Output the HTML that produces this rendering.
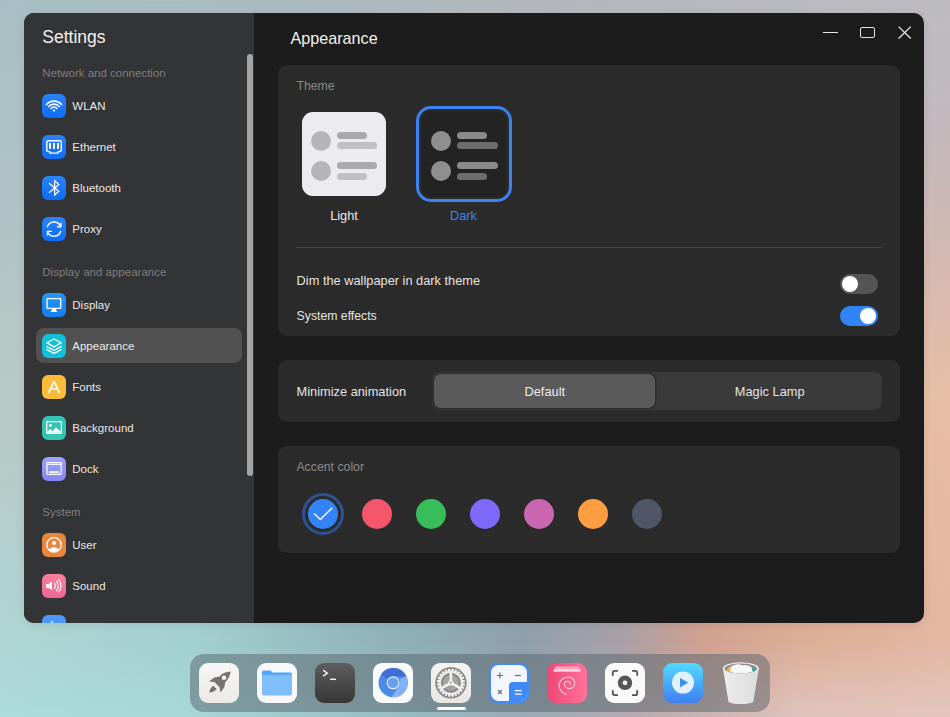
<!DOCTYPE html><html><head><meta charset="utf-8"><style>*{margin:0;padding:0;box-sizing:border-box}
html,body{width:950px;height:717px;overflow:hidden}
body{position:relative;font-family:"Liberation Sans",sans-serif;
background:
 radial-gradient(ellipse 560px 460px at 1000px 560px, rgba(234,184,156,1), rgba(234,184,156,0) 100%),
 radial-gradient(ellipse 460px 360px at -20px 720px, rgba(166,216,214,1), rgba(166,216,214,0) 100%),
 linear-gradient(180deg,#aebfc4 0%,#b9c3c6 50%,#b4cbcb 100%);
}
.abs{position:absolute}
.t{position:absolute;white-space:nowrap;line-height:1}
#win{border-radius:10px;background:#1c1c1c;box-shadow:0 2px 10px rgba(0,0,0,0.08)}
#side{border-radius:10px 0 0 10px;background:#333435}
.ic{position:absolute;width:24px;height:24px;border-radius:6px;overflow:hidden}
.ic svg{display:block}
.panel{border-radius:9px;background:#2b2b2b}
.toggle{width:38px;height:20px;border-radius:10px}
.toggle.off{background:#555555}
.toggle.on{background:#3283f6}
.knob{position:absolute;top:2px;width:16px;height:16px;border-radius:50%;background:#fff}
</style></head><body>
<div class="abs" style="left:0;top:0px;width:950px;height:120px;background:linear-gradient(90deg,#a8bfc4 0px,#abbcc2 300px,#b6b8bd 600px,#bdbcc2 950px)"></div>
<div class="abs" style="left:0;top:0px;width:950px;height:120px;background:linear-gradient(90deg,#acc2c5 0px,#c2b9bd 950px);-webkit-mask-image:linear-gradient(180deg,transparent,#000)"></div>
<div class="abs" style="left:0;top:120px;width:950px;height:100px;background:linear-gradient(90deg,#acc2c5 0px,#c2b9bd 950px)"></div>
<div class="abs" style="left:0;top:120px;width:950px;height:100px;background:linear-gradient(90deg,#b0c4c6 0px,#d0b8b4 950px);-webkit-mask-image:linear-gradient(180deg,transparent,#000)"></div>
<div class="abs" style="left:0;top:220px;width:950px;height:180px;background:linear-gradient(90deg,#b0c4c6 0px,#d0b8b4 950px)"></div>
<div class="abs" style="left:0;top:220px;width:950px;height:180px;background:linear-gradient(90deg,#b8cac6 0px,#e8bea6 950px);-webkit-mask-image:linear-gradient(180deg,transparent,#000)"></div>
<div class="abs" style="left:0;top:400px;width:950px;height:190px;background:linear-gradient(90deg,#b8cac6 0px,#e8bea6 950px)"></div>
<div class="abs" style="left:0;top:400px;width:950px;height:190px;background:linear-gradient(90deg,#b2d2d0 0px,#a6d0d0 190px,#92b2ba 400px,#90a2ae 520px,#aaa2a8 620px,#d0a292 700px,#dcae98 800px,#e6b8a2 950px);-webkit-mask-image:linear-gradient(180deg,transparent,#000)"></div>
<div class="abs" style="left:0;top:590px;width:950px;height:50px;background:linear-gradient(90deg,#b2d2d0 0px,#a6d0d0 190px,#92b2ba 400px,#90a2ae 520px,#aaa2a8 620px,#d0a292 700px,#dcae98 800px,#e6b8a2 950px)"></div>
<div class="abs" style="left:0;top:590px;width:950px;height:50px;background:linear-gradient(90deg,#b0d6d4 0px,#a3d0d0 190px,#8fb0b8 400px,#8ea0ac 520px,#a8a0a8 620px,#d0a090 700px,#dcae96 800px,#e4b8a4 950px);-webkit-mask-image:linear-gradient(180deg,transparent,#000)"></div>
<div class="abs" style="left:0;top:640px;width:950px;height:77px;background:linear-gradient(90deg,#b0d6d4 0px,#a3d0d0 190px,#8fb0b8 400px,#8ea0ac 520px,#a8a0a8 620px,#d0a090 700px,#dcae96 800px,#e4b8a4 950px)"></div>
<div class="abs" style="left:0;top:640px;width:950px;height:77px;background:linear-gradient(90deg,#acdcdc 0px,#a8d8d8 180px,#98bcc4 400px,#98acb6 520px,#b8aab0 640px,#e0c4bc 800px,#e2c6bc 950px);-webkit-mask-image:linear-gradient(180deg,transparent,#000)"></div>
<div class="abs" id="win" style="left:24px;top:13px;width:900px;height:610px;"></div>
<div class="abs" id="side" style="left:24px;top:13px;width:230px;height:610px;"></div>
<div class="t" style="left:42.3px;top:29.09px;font-size:17.5px;color:#f2f2f2;">Settings</div>
<div class="abs" style="left:247px;top:54px;width:6px;height:422px;border-radius:3px;background:#a4a4a4"></div>
<div class="t" style="left:42.3px;top:68.17px;font-size:11.5px;color:#7f7f7f;">Network and connection</div>
<div class="abs ic" style="left:42px;top:94px"><svg width="24" height="24" viewBox="0 0 24 24"><defs><linearGradient id="gb1" x1="0" y1="0" x2="0" y2="1"><stop offset="0" stop-color="#2a82fc"/><stop offset="1" stop-color="#0f6cf4"/></linearGradient></defs><rect width="24" height="24" fill="url(#gb1)"/><g fill="none" stroke="#fff" stroke-width="1.6" stroke-linecap="round"><path d="M4.5,10.6 A9.8,9.8 0 0 1 19.5,10.6"/><path d="M6.8,12.5 A6.8,6.8 0 0 1 17.2,12.5"/><path d="M9.1,14.4 A3.8,3.8 0 0 1 14.9,14.4"/></g><circle cx="12" cy="16.6" r="1.15" fill="#fff"/></svg></div>
<div class="t" style="left:72.3px;top:101.37px;font-size:11.5px;color:#e8e8e8;">WLAN</div>
<div class="abs ic" style="left:42px;top:135px"><svg width="24" height="24" viewBox="0 0 24 24"><rect width="24" height="24" fill="url(#gb1)"/><path d="M6.3,5.8 H17.8 Q19.3,5.8 19.3,7.3 V15.8 L16,17 V18.1 H8 V17 L4.8,15.8 V7.3 Q4.8,5.8 6.3,5.8 Z" fill="none" stroke="#fff" stroke-width="1.4" stroke-linejoin="round"/><g fill="#fff"><rect x="7" y="8" width="2" height="6" rx="0.5"/><rect x="11" y="8" width="2" height="6" rx="0.5"/><rect x="15" y="8" width="2" height="6" rx="0.5"/></g></svg></div>
<div class="t" style="left:72.3px;top:142.37px;font-size:11.5px;color:#e8e8e8;">Ethernet</div>
<div class="abs ic" style="left:42px;top:176px"><svg width="24" height="24" viewBox="0 0 24 24"><rect width="24" height="24" fill="url(#gb1)"/><path d="M7.4,7.6 L16.8,15.3 L12.6,19 V4.6 L16.8,8.4 L7.4,16.4" fill="none" stroke="#fff" stroke-width="1.25" stroke-linejoin="miter" stroke-linecap="round"/></svg></div>
<div class="t" style="left:72.3px;top:183.37px;font-size:11.5px;color:#e8e8e8;">Bluetooth</div>
<div class="abs ic" style="left:42px;top:217px"><svg width="24" height="24" viewBox="0 0 24 24"><rect width="24" height="24" fill="url(#gb1)"/><g fill="none" stroke="#fff" stroke-width="1.4" stroke-linecap="round" stroke-linejoin="round"><path d="M5.4,9.6 A7,7 0 0 1 18.2,8.8"/><path d="M18.9,6.3 V9.8 H15.5"/><path d="M18.6,14.4 A7,7 0 0 1 5.9,15.6"/><path d="M9.4,14.4 H5.5 V17.9"/></g></svg></div>
<div class="t" style="left:72.3px;top:224.37px;font-size:11.5px;color:#e8e8e8;">Proxy</div>
<div class="t" style="left:42.3px;top:267.37px;font-size:11.5px;color:#7f7f7f;">Display and appearance</div>
<div class="abs ic" style="left:42px;top:293px"><svg width="24" height="24" viewBox="0 0 24 24"><defs><linearGradient id="gb2" x1="0" y1="0" x2="0" y2="1"><stop offset="0" stop-color="#229af8"/><stop offset="1" stop-color="#137df2"/></linearGradient></defs><rect width="24" height="24" fill="url(#gb2)"/><rect x="5" y="5.6" width="13.7" height="9.8" rx="0.6" fill="none" stroke="#fff" stroke-width="1.3"/><path d="M10,16 H14 L14.6,18 H15.2 V19 H8.8 V18 H9.4 Z" fill="#fff"/></svg></div>
<div class="t" style="left:72.3px;top:300.37px;font-size:11.5px;color:#e8e8e8;">Display</div>
<div class="abs" style="left:36px;top:328px;width:206px;height:35px;border-radius:8px;background:#515151"></div>
<div class="abs ic" style="left:42px;top:334px"><svg width="24" height="24" viewBox="0 0 24 24"><rect width="24" height="24" fill="#10c1d9"/><g fill="none" stroke="#fff" stroke-width="1.4" stroke-linejoin="round" stroke-linecap="round"><path d="M12,5 L19.1,8.9 L12,12.8 L4.9,8.9 Z"/><path d="M4.9,12.6 L12,16.3 L19.1,12.6"/><path d="M4.9,15.6 L12,19.3 L19.1,15.6"/></g></svg></div>
<div class="t" style="left:72.3px;top:341.37px;font-size:11.5px;color:#e8e8e8;">Appearance</div>
<div class="abs ic" style="left:42px;top:375px"><svg width="24" height="24" viewBox="0 0 24 24"><rect width="24" height="24" fill="#fcbc3b"/><g fill="none" stroke="#fff" stroke-width="1.6" stroke-linecap="round" stroke-linejoin="round"><path d="M6.8,17.4 L12,6.3 L17.2,17.4"/><path d="M8.7,13.8 H15.3"/></g></svg></div>
<div class="t" style="left:72.3px;top:382.37px;font-size:11.5px;color:#e8e8e8;">Fonts</div>
<div class="abs ic" style="left:42px;top:416px"><svg width="24" height="24" viewBox="0 0 24 24"><rect width="24" height="24" fill="#34c4b4"/><rect x="4.7" y="5.6" width="14.7" height="11.7" rx="0.8" fill="none" stroke="#fff" stroke-width="1.25"/><circle cx="8.4" cy="9.5" r="1.4" fill="#fff"/><path d="M5.2,16.8 V15.5 L8.2,13.1 L10.4,15 L13.9,11.4 L18.9,15.5 V16.8 Z" fill="#fff"/></svg></div>
<div class="t" style="left:72.3px;top:423.37px;font-size:11.5px;color:#e8e8e8;">Background</div>
<div class="abs ic" style="left:42px;top:457px"><svg width="24" height="24" viewBox="0 0 24 24"><defs><linearGradient id="gp" x1="0" y1="0" x2="0" y2="1"><stop offset="0" stop-color="#a1a3ff"/><stop offset="1" stop-color="#8585f6"/></linearGradient></defs><rect width="24" height="24" fill="url(#gp)"/><rect x="4.9" y="5.6" width="14.3" height="11.8" rx="0.8" fill="none" stroke="#fff" stroke-width="1.2"/><path d="M4.9,7.4 H19.2" stroke="#fff" stroke-width="1"/><rect x="7" y="14.2" width="10" height="1.7" fill="#fff"/></svg></div>
<div class="t" style="left:72.3px;top:464.37px;font-size:11.5px;color:#e8e8e8;">Dock</div>
<div class="t" style="left:42.3px;top:507.17px;font-size:11.5px;color:#7f7f7f;">System</div>
<div class="abs ic" style="left:42px;top:533px"><svg width="24" height="24" viewBox="0 0 24 24"><rect width="24" height="24" fill="#e8863d"/><circle cx="12" cy="11.9" r="7.2" fill="none" stroke="#fff" stroke-width="1.3"/><circle cx="12" cy="9.9" r="2" fill="#fff"/><path d="M6.6,17.3 Q8,14.2 12,14.2 Q16,14.2 17.4,17.3 Q15.4,19.1 12,19.1 Q8.6,19.1 6.6,17.3 Z" fill="#fff"/></svg></div>
<div class="t" style="left:72.3px;top:540.37px;font-size:11.5px;color:#e8e8e8;">User</div>
<div class="abs ic" style="left:42px;top:574px"><svg width="24" height="24" viewBox="0 0 24 24"><defs><linearGradient id="gs" x1="0" y1="0" x2="0" y2="1"><stop offset="0" stop-color="#f9809f"/><stop offset="1" stop-color="#ef6790"/></linearGradient></defs><rect width="24" height="24" fill="url(#gs)"/><path d="M4.1,10 H6.8 L9.9,7.2 V16 L6.8,14 H4.1 Z" fill="#fff"/><g fill="none" stroke="#fff" stroke-width="1.1" stroke-linecap="round"><path d="M12.4,9 Q14.2,11.8 12.4,14.6"/><path d="M14.6,7 Q17.8,11.9 14.6,16.8"/><path d="M16.8,5.5 Q21,11.8 16.8,18"/></g></svg></div>
<div class="t" style="left:72.3px;top:581.37px;font-size:11.5px;color:#e8e8e8;">Sound</div>
<div class="abs" style="left:42px;top:615px;width:24px;height:8px;overflow:hidden"><div class="abs ic" style="left:0;top:0"><svg width="24" height="24" viewBox="0 0 24 24"><rect width="24" height="24" fill="#5097fb"/><path d="M9,5.2 L11.6,7.6 L9.6,8 Z" fill="#fff"/></svg></div></div>
<div class="t" style="left:290.4px;top:29.99px;font-size:16.2px;color:#f2f2f2;">Appearance</div>
<div class="abs" style="left:823px;top:31.7px;width:15px;height:1.5px;background:#e8e8e8"></div>
<div class="abs" style="left:860px;top:27px;width:14.5px;height:11px;border:1.4px solid #e0e0e0;border-radius:2px"></div>
<svg class="abs" style="left:897px;top:25px" width="15" height="15" viewBox="0 0 15 15"><g stroke="#e6e6e6" stroke-width="1.3"><path d="M1.6,1.6 L13.8,13.5"/><path d="M13.8,1.6 L1.6,13.5"/></g></svg><div class="abs panel" style="left:278px;top:65px;width:622px;height:271px"></div>
<div class="t" style="left:296.4px;top:80.49px;font-size:12.3px;color:#8a8a8a;">Theme</div>
<div class="abs" style="left:302px;top:112px;width:84px;height:84px;border-radius:11px;background:#ececf0"></div>
<div class="abs" style="left:311px;top:130.5px;width:20px;height:20px;border-radius:50%;background:#b5b4b6"></div>
<div class="abs" style="left:311px;top:161px;width:20px;height:20px;border-radius:50%;background:#b5b4b6"></div>
<div class="abs" style="left:337px;top:131.5px;width:30px;height:7px;border-radius:3.5px;background:#a9a9ad"></div>
<div class="abs" style="left:337px;top:142.4px;width:40px;height:7px;border-radius:3.5px;background:#c0c0c4"></div>
<div class="abs" style="left:337px;top:162.2px;width:40px;height:7px;border-radius:3.5px;background:#a9a9ad"></div>
<div class="abs" style="left:337px;top:172.8px;width:30px;height:7px;border-radius:3.5px;background:#c0c0c4"></div><div class="abs" style="left:416px;top:106px;width:96px;height:96px;border-radius:15px;border:3px solid #3b83f1"></div>
<div class="abs" style="left:420px;top:110px;width:88px;height:88px;border-radius:12px;background:#232323;box-shadow:inset 0 0 0 1.2px #2c2c2c"></div>
<div class="abs" style="left:431px;top:130.5px;width:20px;height:20px;border-radius:50%;background:#8f8f8f"></div>
<div class="abs" style="left:431px;top:161px;width:20px;height:20px;border-radius:50%;background:#8f8f8f"></div>
<div class="abs" style="left:456.5px;top:131.5px;width:30px;height:7px;border-radius:3.5px;background:#8a8a8a"></div>
<div class="abs" style="left:456.5px;top:142.2px;width:41px;height:7px;border-radius:3.5px;background:#6d6d6d"></div>
<div class="abs" style="left:456.5px;top:161.8px;width:41px;height:7px;border-radius:3.5px;background:#8a8a8a"></div>
<div class="abs" style="left:456.5px;top:172.6px;width:30px;height:7px;border-radius:3.5px;background:#6d6d6d"></div><div class="t" style="left:194px;width:300px;text-align:center;top:209.76px;font-size:12.8px;color:#e8e8e8;">Light</div>
<div class="t" style="left:313.5px;width:300px;text-align:center;top:209.76px;font-size:12.8px;color:#3f83e6;">Dark</div>
<div class="abs" style="left:296px;top:247px;width:586px;height:1px;background:#474747"></div>
<div class="t" style="left:296.6px;top:274.86px;font-size:12.8px;color:#e4e4e4;">Dim the wallpaper in dark theme</div>
<div class="t" style="left:296.6px;top:310.13px;font-size:12.25px;color:#e4e4e4;">System effects</div>
<div class="abs toggle off" style="left:840px;top:273.5px"><div class="knob" style="left:2px"></div></div>
<div class="abs toggle on" style="left:840px;top:305.5px"><div class="knob" style="left:20px"></div></div>
<div class="abs panel" style="left:278px;top:360px;width:622px;height:62px"></div>
<div class="t" style="left:296.6px;top:385.96px;font-size:12.8px;color:#e4e4e4;">Minimize animation</div>
<div class="abs" style="left:432px;top:372px;width:450px;height:38px;border-radius:8px;background:#3a3a3a"></div>
<div class="abs" style="left:434px;top:374px;width:221px;height:34px;border-radius:7px;background:#5a5a5a;box-shadow:0 0 0 1.5px #2f2f2f"></div>
<div class="t" style="left:394.79999999999995px;width:300px;text-align:center;top:385.76px;font-size:12.8px;color:#ececec;">Default</div>
<div class="t" style="left:619.7px;width:300px;text-align:center;top:385.76px;font-size:12.8px;color:#e4e4e4;">Magic Lamp</div>
<div class="abs panel" style="left:278px;top:446px;width:622px;height:107px"></div>
<div class="t" style="left:296.4px;top:461.19px;font-size:12.3px;color:#8a8a8a;">Accent color</div>
<div class="abs" style="left:302px;top:493px;width:42px;height:42px;border-radius:50%;border:3.3px solid #2f5191"></div>
<div class="abs" style="left:308px;top:499px;width:30px;height:30px;border-radius:50%;background:#3384f6"></div>
<svg class="abs" style="left:308px;top:499px" width="30" height="30" viewBox="0 0 30 30"><path d="M6.4,14.7 L12.3,20.6 L23.8,9.3" fill="none" stroke="#fff" stroke-width="1.4" stroke-linecap="round" stroke-linejoin="round"/></svg>
<div class="abs" style="left:362px;top:499px;width:30px;height:30px;border-radius:50%;background:#f5566c"></div>
<div class="abs" style="left:416px;top:499px;width:30px;height:30px;border-radius:50%;background:#37bd5a"></div>
<div class="abs" style="left:470px;top:499px;width:30px;height:30px;border-radius:50%;background:#7f69fb"></div>
<div class="abs" style="left:524px;top:499px;width:30px;height:30px;border-radius:50%;background:#cb66b1"></div>
<div class="abs" style="left:578px;top:499px;width:30px;height:30px;border-radius:50%;background:#fd9e43"></div>
<div class="abs" style="left:632px;top:499px;width:30px;height:30px;border-radius:50%;background:#4f5668"></div><div class="abs" style="left:190px;top:654px;width:580px;height:58px;border-radius:14px;background:rgba(88,100,108,0.5)"></div>
<div class="abs" style="left:199px;top:663px;width:40px;height:40px;border-radius:9px;background:linear-gradient(180deg,#f7f6f4,#ebe9e6)"></div>
<svg class="abs" style="left:199px;top:663px" width="40" height="40" viewBox="0 0 40 40"><g fill="#737370"><path d="M31.6,8.6 Q25,8.8 20.5,13.5 L15.3,14.5 L10.2,18.3 L15.8,19.3 L20.6,24.3 L21.4,29.5 L25.3,24.2 L26.2,19.2 Q31,14.6 31.6,8.6 Z"/><path d="M14.3,22.7 L17.6,26 Q15,29.2 10.4,29.6 Q10.6,25 14.3,22.7 Z"/></g><circle cx="25" cy="14.8" r="2.3" fill="#f5f4f2"/></svg>
<div class="abs" style="left:257px;top:663px;width:40px;height:40px;border-radius:9px;background:#f8f8f8"></div>
<svg class="abs" style="left:257px;top:663px" width="40" height="40" viewBox="0 0 40 40"><path d="M5,9.2 Q5,7.5 6.7,7.5 H13.5 L15.5,9.5 H33.3 Q35,9.5 35,11.2 V14 H5 Z" fill="#4aa6ff"/><path d="M5,11.8 H35 V30.8 Q35,32.6 33.2,32.6 H6.8 Q5,32.6 5,30.8 Z" fill="#80bfff"/></svg>
<div class="abs" style="left:315px;top:663px;width:40px;height:40px;border-radius:9px;background:linear-gradient(180deg,#5e5e5e,#373737)"></div>
<svg class="abs" style="left:315px;top:663px" width="40" height="40" viewBox="0 0 40 40"><g fill="none" stroke="#f0f0f0" stroke-width="1.5"><path d="M8.1,7.2 L12.3,10.2 L8.1,13.2"/><path d="M15,16.3 H21"/></g></svg>
<div class="abs" style="left:373px;top:663px;width:40px;height:40px;border-radius:9px;background:#f9fafc"></div>
<svg class="abs" style="left:373px;top:663px" width="40" height="40" viewBox="0 0 40 40"><circle cx="20.2" cy="19.7" r="14.6" fill="#4b8bea"/><path d="M20.2,5.1 A14.6,14.6 0 0 1 33.3,13.3 L20.2,13.3 A6.5,6.5 0 0 0 14.6,16.5 L8.1,11.3 A14.6,14.6 0 0 1 20.2,5.1 Z" fill="#3e6fd7"/><path d="M33.3,13.3 A14.6,14.6 0 0 1 18.5,34.2 L25.8,23 A6.5,6.5 0 0 0 26.5,16 Z" fill="#86b1f4"/><circle cx="20.1" cy="19.8" r="6.5" fill="#e6edf8"/><circle cx="20.1" cy="19.8" r="5.3" fill="#66a0f2"/></svg>
<div class="abs" style="left:431px;top:663px;width:40px;height:40px;border-radius:9px;background:linear-gradient(180deg,#f4f3f1,#e9e7e3)"></div>
<svg class="abs" style="left:431px;top:663px" width="40" height="40" viewBox="0 0 40 40"><g transform="translate(19.9,19.8)"><circle r="15.8" fill="#8d8d8d"/><circle r="11.6" fill="#f2f1ef"/><path d="M-1.5,-11 L-1,-14 H1 L1.5,-11 Z" fill="#f2f1ef" transform="rotate(7.5)"/><path d="M-1.5,-11 L-1,-14 H1 L1.5,-11 Z" fill="#f2f1ef" transform="rotate(22.5)"/><path d="M-1.5,-11 L-1,-14 H1 L1.5,-11 Z" fill="#f2f1ef" transform="rotate(37.5)"/><path d="M-1.5,-11 L-1,-14 H1 L1.5,-11 Z" fill="#f2f1ef" transform="rotate(52.5)"/><path d="M-1.5,-11 L-1,-14 H1 L1.5,-11 Z" fill="#f2f1ef" transform="rotate(67.5)"/><path d="M-1.5,-11 L-1,-14 H1 L1.5,-11 Z" fill="#f2f1ef" transform="rotate(82.5)"/><path d="M-1.5,-11 L-1,-14 H1 L1.5,-11 Z" fill="#f2f1ef" transform="rotate(97.5)"/><path d="M-1.5,-11 L-1,-14 H1 L1.5,-11 Z" fill="#f2f1ef" transform="rotate(112.5)"/><path d="M-1.5,-11 L-1,-14 H1 L1.5,-11 Z" fill="#f2f1ef" transform="rotate(127.5)"/><path d="M-1.5,-11 L-1,-14 H1 L1.5,-11 Z" fill="#f2f1ef" transform="rotate(142.5)"/><path d="M-1.5,-11 L-1,-14 H1 L1.5,-11 Z" fill="#f2f1ef" transform="rotate(157.5)"/><path d="M-1.5,-11 L-1,-14 H1 L1.5,-11 Z" fill="#f2f1ef" transform="rotate(172.5)"/><path d="M-1.5,-11 L-1,-14 H1 L1.5,-11 Z" fill="#f2f1ef" transform="rotate(187.5)"/><path d="M-1.5,-11 L-1,-14 H1 L1.5,-11 Z" fill="#f2f1ef" transform="rotate(202.5)"/><path d="M-1.5,-11 L-1,-14 H1 L1.5,-11 Z" fill="#f2f1ef" transform="rotate(217.5)"/><path d="M-1.5,-11 L-1,-14 H1 L1.5,-11 Z" fill="#f2f1ef" transform="rotate(232.5)"/><path d="M-1.5,-11 L-1,-14 H1 L1.5,-11 Z" fill="#f2f1ef" transform="rotate(247.5)"/><path d="M-1.5,-11 L-1,-14 H1 L1.5,-11 Z" fill="#f2f1ef" transform="rotate(262.5)"/><path d="M-1.5,-11 L-1,-14 H1 L1.5,-11 Z" fill="#f2f1ef" transform="rotate(277.5)"/><path d="M-1.5,-11 L-1,-14 H1 L1.5,-11 Z" fill="#f2f1ef" transform="rotate(292.5)"/><path d="M-1.5,-11 L-1,-14 H1 L1.5,-11 Z" fill="#f2f1ef" transform="rotate(307.5)"/><path d="M-1.5,-11 L-1,-14 H1 L1.5,-11 Z" fill="#f2f1ef" transform="rotate(322.5)"/><path d="M-1.5,-11 L-1,-14 H1 L1.5,-11 Z" fill="#f2f1ef" transform="rotate(337.5)"/><path d="M-1.5,-11 L-1,-14 H1 L1.5,-11 Z" fill="#f2f1ef" transform="rotate(352.5)"/><circle r="10.1" fill="#8b8b8b"/><circle r="7.8" fill="#a3a3a3"/><g stroke="#f2f1ef" stroke-width="2.6" stroke-linecap="butt"><path d="M0,0 V-10.4"/><path d="M0,0 L9,5.2"/><path d="M0,0 L-9,5.2"/></g><circle r="2.6" fill="#f2f1ef"/><circle r="1" fill="#9a9a9a"/></g></svg>
<div class="abs" style="left:489px;top:663px;width:40px;height:40px;border-radius:9px;background:#3f8bf8"></div>
<div class="abs" style="left:491px;top:665px;width:36px;height:36px;border-radius:7.5px;background:#f3f7fd;overflow:hidden"><div class="abs" style="left:18px;top:17px;width:22px;height:22px;border-radius:4px;background:#4189f7"></div></div>
<svg class="abs" style="left:489px;top:663px" width="40" height="40" viewBox="0 0 40 40"><g stroke="#6e6e6e" stroke-width="1.2" fill="none"><path d="M7.8,12.5 H14 M10.9,9.4 V15.6"/><path d="M25.8,12.5 H31.9"/><path d="M8.9,27 L12.9,31 M12.9,27 L8.9,31"/></g><g stroke="#fff" stroke-width="1.2"><path d="M25.8,27.6 H32.8 M25.8,31.1 H32.8"/></g></svg>
<div class="abs" style="left:547px;top:663px;width:40px;height:40px;border-radius:9px;background:linear-gradient(90deg,#ee4674,#ff729b)"></div>
<svg class="abs" style="left:547px;top:663px" width="40" height="40" viewBox="0 0 40 40"><path d="M8.2,3.6 H32 L33.9,8.4 H6.3 Z" fill="#f9a9bf"/><path d="M7.2,6.6 H33 L33.9,8.4 H6.3 Z" fill="#ffdce4"/><path d="M18.8,31.6 C14,29.5 11.5,25 12.2,21 C13,16.5 17,14 21,14 C25,14 27.8,16.5 27.8,19.8 C27.8,23.5 25,25.6 22.2,25.6 C19.5,25.6 17.4,23.8 17.4,21.5 C17.4,19.5 19,18.2 20.7,18.2 C22.2,18.2 23.4,19.4 23.3,21.2" fill="none" stroke="#ffd6d0" stroke-width="1.05" stroke-linecap="round"/></svg>
<div class="abs" style="left:605px;top:663px;width:40px;height:40px;border-radius:9px;background:#fafafa"></div>
<svg class="abs" style="left:605px;top:663px" width="40" height="40" viewBox="0 0 40 40"><g fill="none" stroke="#505050" stroke-width="1.8" stroke-linecap="round"><path d="M7.8,12 V9.8 Q7.8,7.8 9.8,7.8 H12.2"/><path d="M27.8,7.8 H30.2 Q32.2,7.8 32.2,9.8 V12"/><path d="M32.2,27.8 V30.2 Q32.2,32.2 30.2,32.2 H27.8"/><path d="M12.2,32.2 H9.8 Q7.8,32.2 7.8,30.2 V27.8"/></g><circle cx="20" cy="19.8" r="7.2" fill="#555"/><circle cx="20" cy="19.8" r="2.4" fill="#fafafa"/></svg>
<div class="abs" style="left:663px;top:663px;width:40px;height:40px;border-radius:9px;background:linear-gradient(180deg,#52daff,#3f7ff2)"></div>
<svg class="abs" style="left:663px;top:663px" width="40" height="40" viewBox="0 0 40 40"><circle cx="20" cy="19.6" r="11" fill="#e2f1ff"/><path d="M17,15.1 L25.1,19.6 L17,24.6 Z" fill="#3f8ef0"/></svg>
<svg class="abs" style="left:721px;top:661px" width="40" height="46" viewBox="0 0 40 46"><defs><linearGradient id="gt" x1="0" x2="1"><stop offset="0" stop-color="#ededed"/><stop offset="1" stop-color="#dcdcdc"/></linearGradient></defs><path d="M2,7.5 L7.4,40.2 Q8.5,43 19.9,43 Q31.2,43 32.4,40.2 L37.8,7.5 Z" fill="url(#gt)"/><ellipse cx="19.9" cy="7.3" rx="18" ry="6.1" fill="#efefef"/><ellipse cx="19.8" cy="7.6" rx="16.3" ry="5.1" fill="#8c8c8c"/><path d="M7.8,10.2 Q8.6,5.6 13.6,3.8 Q17.5,2.6 21.5,4.2 Q26.5,3.4 29.6,5.6 L33,10.3 Q26,12.6 19.5,12.6 Q12.5,12.6 7.8,10.2 Z" fill="#f7f7f7"/><path d="M5.6,10 Q6,6.8 9.5,5.6 L9.6,10.6 Z" fill="#f3b446"/><path d="M31.2,7 L33.8,8 L33.6,10.4 L31.2,10 Z" fill="#16a898"/></svg>
<div class="abs" style="left:436.5px;top:707px;width:29px;height:3px;border-radius:1.5px;background:#fafafa"></div></body></html>
